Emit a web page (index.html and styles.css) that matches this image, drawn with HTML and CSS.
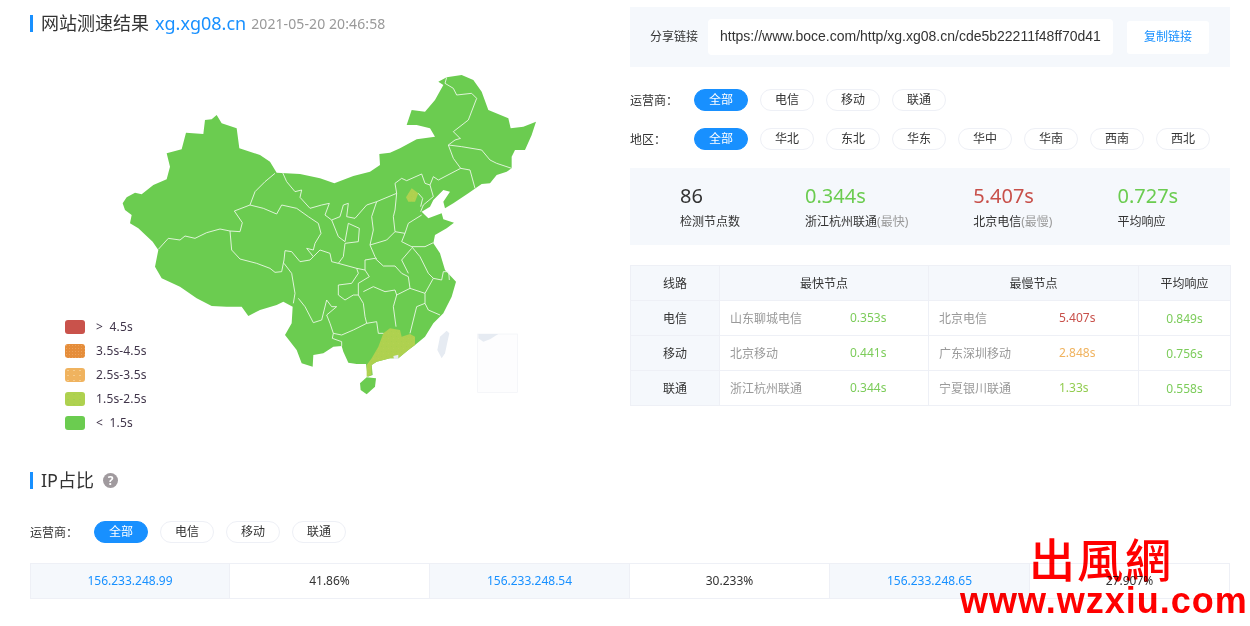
FILE: index.html
```html
<!DOCTYPE html>
<html lang="zh-CN">
<head>
<meta charset="utf-8">
<title>网站测速结果</title>
<link rel="stylesheet" href="styles.css">
</head>
<body>
<main class="page">
  <section class="top">
    <div class="left">
      <h1 class="heading">网站测速结果<span class="domain">xg.xg08.cn</span><span class="date">2021-05-20 20:46:58</span></h1>
      <svg class="map" viewBox="0 0 1350 1050" width="450" height="350" aria-label="地图">
        <defs>
          <pattern id="dots" width="15" height="15" patternUnits="userSpaceOnUse">
            <rect width="15" height="15" fill="#afd14f"/>
            <circle cx="4" cy="4" r="1" fill="#9ccf50"/>
            <circle cx="11" cy="11" r="1" fill="#bcd562"/>
          </pattern>
        </defs>
        <path class="land" d="M68 430L80 412L105 398L125 403L160 375L200 358L210 320L200 280L245 268L258 218L310 222L315 180L335 178L350 165L365 190L410 205L418 265L480 285L510 305L530 338L600 342L660 355L703 370L760 348L810 335L840 315L838 282L870 278L900 265L950 238L1005 230L990 205L950 195L920 195L935 150L975 155L1005 120L1030 75L1015 65L1040 52L1085 45L1120 60L1145 95L1165 150L1225 175L1232 205L1270 200L1308 185L1295 225L1275 270L1245 270L1235 290L1235 325L1220 335L1190 345L1170 370L1145 372L1105 400L1060 430L1035 445L1030 425L1050 395L1030 390L1000 420L990 440L965 455L985 475L1025 460L1030 478L1062 488L1040 505L1005 525L1000 550L1020 580L1035 630L1068 665L1055 710L1030 760L1000 790L975 830L945 855L925 870L895 895L870 895L830 905L815 915L818 945L803 950L798 912L770 912L745 908L730 875L725 858L700 860L670 880L640 885L638 920L605 910L590 870L555 825L575 790L578 740L550 725L530 735L480 750L445 768L425 740L380 740L335 738L290 715L240 680L185 655L165 620L175 570L158 545L115 505L90 490L95 465L75 450Z"/>
        <path class="land" d="M780 970L800 952L828 955L825 980L800 1003L782 990Z"/>
        <path fill="url(#dots)" d="M800 950L815 945L815 915L830 905L870 895L895 895L925 870L945 855L945 830L930 822L905 830L900 810L870 805L850 820L835 860L815 895L800 915Z"/>
        <path fill="url(#dots)" d="M918 412L935 385L955 400L945 425L925 425Z"/>
        <path class="line" d="M175 568L205 535L240 540L255 528L285 535L320 518L360 507L390 513L420 515L427 488L403 453L450 435L465 395L495 365L525 340"/>
        <path class="line" d="M548 338L560 365L585 395L605 390L600 412L630 445L665 435L688 430L675 465L695 480L715 530L735 545L745 490L778 505L775 545L735 550L730 590L715 610"/>
        <path class="line" d="M450 435L490 445L530 462L545 435L590 445L625 470L655 490L663 520L645 550L640 570L620 565L640 590L660 570L690 580L695 605L715 610L770 625L795 630L795 600L825 595L850 618L885 618L905 640L925 650L930 685"/>
        <path class="line" d="M390 513L395 570L420 597L470 610L510 625L525 637L545 635L552 600L555 572L575 575L600 605L630 600L640 590"/>
        <path class="line" d="M552 610L575 640L585 700L580 730M595 715L615 740L640 788L665 780L680 720L695 740L710 740L680 765L690 790L700 820L725 825L760 810L800 790L830 785L835 820L850 820M700 820L697 835L725 845L725 858"/>
        <path class="line" d="M770 625L775 640L755 670L715 675L715 705L735 720L760 705L775 705L790 730L795 770L800 790M795 630L808 650L775 670L775 705"/>
        <path class="line" d="M695 480L720 470L730 435L745 430L740 470L765 475L800 435L830 425L815 470L820 510L810 555L825 590L830 597"/>
        <path class="line" d="M790 695L820 680L855 695L885 690L890 705L930 685L975 700L975 730L950 740L930 820M890 705L880 740L888 800"/>
        <path class="line" d="M975 700L1000 655L1025 660L1030 635L1046 635L1048 660M975 730L985 750L1020 765"/>
        <path class="line" d="M905 545L935 560L960 590L985 640L1000 655M935 565L905 600L925 640M935 560L975 560L1000 548M905 545L915 520L885 515L860 540L810 555"/>
        <path class="line" d="M830 425L890 400L885 450L880 470L885 515M915 520L925 490L965 465M890 400L885 370L905 355L920 362L965 342L975 370L990 375L1000 410L970 435L962 455"/>
        <path class="line" d="M990 375L1000 350L1015 360L1082 325L1110 330L1125 385M1082 325L1060 295L1045 255L1065 240L1082 235M1045 255L1085 260L1145 270L1170 300L1190 310L1235 325"/>
        <path class="line" d="M1040 52L1035 70L1060 85L1070 105L1115 100L1130 115L1105 180L1060 215L1080 235"/>
        <path class="line" d="M955 400L968 415L962 440"/>
        <path class="pale" d="M1012 870L1020 830L1040 812L1048 820L1035 880L1025 895Z"/>
        <path class="pale" d="M880 888L895 884L895 897L882 897Z"/>
        <rect class="inset" x="1133" y="822" width="119" height="175"/>
        <path class="pale" d="M1135 822L1195 822L1170 838L1150 845L1135 835Z"/>
      </svg>
      <ul class="legend">
        <li class="legend-row"><span class="swatch swatch-red"></span>&gt;  4.5s</li>
        <li class="legend-row"><span class="swatch swatch-deep"></span>3.5s-4.5s</li>
        <li class="legend-row"><span class="swatch swatch-orange"></span>2.5s-3.5s</li>
        <li class="legend-row"><span class="swatch swatch-lime"></span>1.5s-2.5s</li>
        <li class="legend-row"><span class="swatch swatch-green"></span>&lt;  1.5s</li>
      </ul>
    </div>
    <div class="right">
      <div class="share">
        <span class="share-label">分享链接</span>
        <div class="share-url">https://www.boce.com/http/xg.xg08.cn/cde5b22211f48ff70d41</div>
        <div class="share-btn">复制链接</div>
      </div>
      <div class="tabs tabs-first">
        <span class="tabs-label">运营商：</span>
        <span class="pill pill-on">全部</span><span class="pill">电信</span><span class="pill">移动</span><span class="pill">联通</span>
      </div>
      <div class="tabs tabs-second">
        <span class="tabs-label">地区：</span>
        <span class="pill pill-on">全部</span><span class="pill">华北</span><span class="pill">东北</span><span class="pill">华东</span><span class="pill">华中</span><span class="pill">华南</span><span class="pill">西南</span><span class="pill">西北</span>
      </div>
      <div class="stats">
        <div class="stat"><div class="stat-num">86</div><div class="stat-label">检测节点数</div></div>
        <div class="stat"><div class="stat-num c-green">0.344s</div><div class="stat-label">浙江杭州联通<span class="muted">(最快)</span></div></div>
        <div class="stat"><div class="stat-num c-red">5.407s</div><div class="stat-label">北京电信<span class="muted">(最慢)</span></div></div>
        <div class="stat"><div class="stat-num c-green">0.727s</div><div class="stat-label">平均响应</div></div>
      </div>
      <table class="lines">
        <colgroup><col class="col-a"><col class="col-b"><col class="col-d"><col class="col-c"></colgroup>
        <thead><tr><th>线路</th><th>最快节点</th><th>最慢节点</th><th>平均响应</th></tr></thead>
        <tbody>
          <tr><th>电信</th><td><div class="node"><span class="node-name">山东聊城电信</span><span class="c-green">0.353s</span></div></td><td><div class="node"><span class="node-name">北京电信</span><span class="c-red">5.407s</span></div></td><td class="avg c-green">0.849s</td></tr>
          <tr><th>移动</th><td><div class="node"><span class="node-name">北京移动</span><span class="c-green">0.441s</span></div></td><td><div class="node"><span class="node-name">广东深圳移动</span><span class="c-orange">2.848s</span></div></td><td class="avg c-green">0.756s</td></tr>
          <tr><th>联通</th><td><div class="node"><span class="node-name">浙江杭州联通</span><span class="c-green">0.344s</span></div></td><td><div class="node"><span class="node-name">宁夏银川联通</span><span class="c-lime">1.33s</span></div></td><td class="avg c-green">0.558s</td></tr>
        </tbody>
      </table>
    </div>
  </section>
  <section class="ip">
    <h2 class="heading">IP占比<span class="help">?</span></h2>
    <div class="tabs tabs-ip">
      <span class="tabs-label">运营商：</span>
      <span class="pill pill-on">全部</span><span class="pill">电信</span><span class="pill">移动</span><span class="pill">联通</span>
    </div>
    <div class="ip-table">
      <div class="ip-addr">156.233.248.99</div><div class="ip-pct">41.86%</div>
      <div class="ip-addr">156.233.248.54</div><div class="ip-pct">30.233%</div>
      <div class="ip-addr">156.233.248.65</div><div class="ip-pct">27.907%</div>
    </div>
  </section>
  <div class="mark">
    <div class="mark-logo">出風網</div>
    <div class="mark-url">www.wzxiu.com</div>
  </div>
</main>
</body>
</html>
```
FILE: styles.css
```css
* { box-sizing: border-box; }
html, body { margin: 0; padding: 0; background: #fff; }
body {
  font-family: "Noto Sans", "Noto Sans CJK SC", sans-serif;
  font-size: 12px;
  color: #333;
  overflow: hidden;
}
.page { position: relative; width: 1250px; height: 626px; padding: 15px 20px 0 30px; }
.top { display: flex; }
.left { position: relative; width: 600px; height: 395px; }
.right { width: 600px; margin-top: -8px; }

.heading {
  margin: 0;
  height: 17px;
  padding-left: 8px;
  border-left: 3px solid #1890ff;
  font-size: 18px;
  line-height: 17px;
  font-weight: 400;
  color: #333;
  display: flex;
  align-items: center;
  white-space: pre;
}
.domain { margin-left: 6px; color: #1890ff; }
.date { margin-left: 5px; font-size: 14px; letter-spacing: 0.1px; color: #999; }
.map { display: block; margin: 28px 0 0 70px; }
.land { fill: #6bcc50; }
.line { fill: none; stroke: #f0f9ec; stroke-width: 2.6; stroke-linejoin: round; }
.pale { fill: #e6ebf2; }
.inset { fill: #fdfdfe; stroke: #f0f2f7; stroke-width: 2; }

.legend { position: absolute; left: 35px; top: 305px; margin: 0; padding: 0; list-style: none; display: flex; flex-direction: column; gap: 10px; }
.legend-row { display: flex; align-items: center; gap: 11px; height: 14px; line-height: 14px; letter-spacing: 0.15px; color: #40354a; white-space: pre; }
.swatch { width: 20px; height: 14px; border-radius: 3px; }
.swatch-red { background: #c9524b; }
.swatch-deep { background: radial-gradient(circle, #eda25c 0.7px, transparent 1px) 0 0 / 3px 3px, #e58d3a; }
.swatch-orange { background: radial-gradient(circle, #f6cc8c 0.6px, transparent 0.9px) 0 0 / 6px 5px, #f0b35f; }
.swatch-lime { background: radial-gradient(circle, #a3d050 0.6px, transparent 0.9px) 0 0 / 6px 5px, #afd14f; }
.swatch-green { background: #6bcc50; }

.share { height: 60px; background: #f5f8fc; display: flex; align-items: center; padding-left: 20px; }
.share-label { width: 58px; padding-bottom: 2px; }
.share-url { width: 405px; height: 36px; padding-left: 12px; background: #fff; border-radius: 4px; font-family: "Liberation Sans", sans-serif; font-size: 14px; line-height: 35px; white-space: nowrap; overflow: hidden; }
.share-btn { width: 82px; height: 33px; margin-left: 14px; background: #fff; border-radius: 3px; color: #1890ff; text-align: center; line-height: 31px; }

.tabs { display: flex; align-items: center; gap: 12px; height: 22px; }
.tabs-first { margin-top: 22px; }
.tabs-second { margin-top: 17px; }
.tabs-ip { margin-top: 32px; }
.tabs-label { width: 52px; white-space: nowrap; }
.pill { width: 54px; height: 22px; border: 1px solid #eef0f6; border-radius: 11px; text-align: center; line-height: 20px; }
.pill-on { background: #1890ff; border-color: #1890ff; color: #fff; }

.stats { height: 77px; margin-top: 18px; background: #f5f8fc; display: flex; gap: 65px; padding: 17px 0 0 50px; }
.stat-num { font-size: 20px; line-height: 22px; white-space: nowrap; }
.stat-label { margin-top: 8px; line-height: 14px; white-space: nowrap; }
.muted { color: #999; }
.c-green { color: #7ccc5a; }
.c-red { color: #c8504a; }
.c-orange { color: #f0b35f; }
.c-lime { color: #92cc4f; }
.stat-num.c-green { color: #6bcc50; }

.lines { width: 600px; margin-top: 20px; border-collapse: collapse; table-layout: fixed; }
.col-a { width: 89px; }
.col-b { width: 209px; }
.col-d { width: 210px; }
.col-c { width: 92px; }
.lines th, .lines td { height: 35px; padding: 0; border: 1px solid #eef0f6; font-weight: 400; font-size: 12px; text-align: center; }
.lines thead th, .lines tbody th { background: #f5f8fc; }
.node { display: flex; padding-left: 10px; }
.node-name { width: 120px; text-align: left; color: #999; }

.ip { margin-top: 62px; }
.ip-table { display: grid; grid-template-columns: repeat(6, 200px); margin-top: 20px; height: 36px; border-top: 1px solid #eef0f6; border-bottom: 1px solid #eef0f6; }
.ip-addr, .ip-pct { text-align: center; line-height: 34px; border-right: 1px solid #eef0f6; }
.ip-addr { background: #f5f8fc; color: #1890ff; }
.ip-addr:first-child { border-left: 1px solid #eef0f6; }

.help { display: inline-block; width: 15px; height: 15px; margin-left: 9px; border-radius: 50%; background: #a09a9e; color: #fff; font-size: 12px; font-weight: 700; line-height: 15px; text-align: center; }

.mark { position: absolute; left: 960px; top: 530px; width: 290px; color: #f00; mix-blend-mode: multiply; }
.mark-logo { margin-left: 69px; font-family: "Noto Sans CJK TC", sans-serif; font-size: 46px; line-height: 55px; font-weight: 500; letter-spacing: 2px; white-space: nowrap; }
.mark-url { font-family: "Liberation Sans", sans-serif; font-size: 36px; line-height: 32px; font-weight: 700; letter-spacing: 1px; white-space: nowrap; }
```
